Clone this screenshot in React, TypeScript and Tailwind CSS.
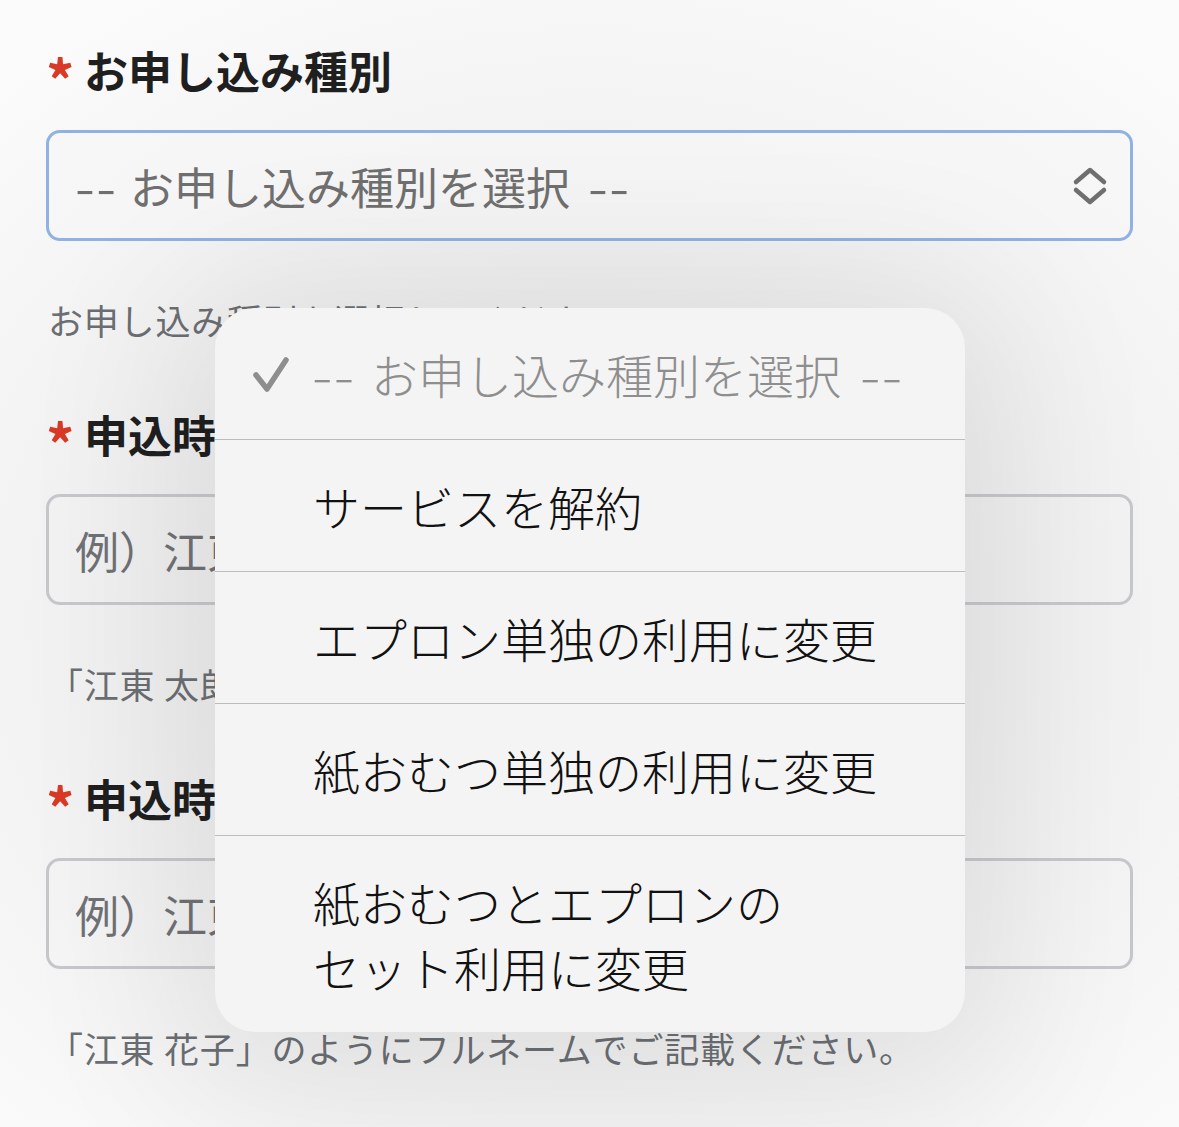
import React from "react";

function Chevrons() {
  return (
    <svg width="36" height="40" viewBox="0 0 36 40" fill="none" className="shrink-0">
      <path d="M4 16 L18 4 L32 16" stroke="#6f6f6f" strokeWidth="4.5" strokeLinecap="round" strokeLinejoin="round" />
      <path d="M4 24 L18 36 L32 24" stroke="#6f6f6f" strokeWidth="4.5" strokeLinecap="round" strokeLinejoin="round" />
    </svg>
  );
}

function Check() {
  return (
    <svg width="38" height="36" viewBox="0 0 38 36" fill="none" className="shrink-0">
      <path d="M4 19 L15 33 L34 4" stroke="#8e8e8e" strokeWidth="5.5" strokeLinecap="round" strokeLinejoin="round" />
    </svg>
  );
}

function Label({ text }: { text: string }) {
  return (
    <div className="flex h-[60px] items-center">
      <span className="w-[38px] translate-y-[8px] text-[56px] font-bold leading-none text-[#d93a26]">*</span>
      <span className="whitespace-nowrap text-[44px] font-bold leading-none text-[#1f1f1f]">{text}</span>
    </div>
  );
}

function Help({ text }: { text: string }) {
  return (
    <div className="mt-[57px] ml-[2px] h-[44px] whitespace-nowrap text-[35px] leading-[44px] tracking-[0.8px] text-[#6b6e72]">{text}</div>
  );
}

function Field({ label, placeholder, help }: { label: string; placeholder: string; help: string }) {
  return (
    <div className="flex flex-col">
      <Label text={label} />
      <div className="mt-[30px] flex h-[111px] items-center rounded-[14px] border-[3px] border-[#c5c7cb] pl-[26px]">
        <span className="whitespace-nowrap text-[44px] leading-none text-[#6f7175]">{placeholder}</span>
      </div>
      <Help text={help} />
    </div>
  );
}

export default function App() {
  const rows = ["サービスを解約", "エプロン単独の利用に変更", "紙おむつ単独の利用に変更"];
  return (
    <div className="relative h-[1127px] w-[1179px] overflow-hidden bg-[radial-gradient(ellipse_75%_65%_at_50%_55%,#e9e9e9_0%,#eeeeee_45%,#f6f6f6_80%,#fbfbfb_100%)] font-['Noto_Sans_CJK_JP','Noto_Sans',sans-serif]">
      <div className="flex flex-col gap-[62px] px-[46px] pt-[40px]">
        <div className="flex flex-col">
          <Label text="お申し込み種別" />
          <div className="mt-[30px] flex h-[111px] items-center justify-between rounded-[14px] border-[3px] border-[#8fb2e2] bg-[#f6f6f6]/60 pl-[26px] pr-[22px]">
            <span className="whitespace-nowrap text-[44px] leading-none text-[#6f6f6f]">
              <span className="inline-block w-[55px]"><span className="inline-block origin-left scale-x-[1.3] tracking-[1px]">--</span></span>
              お申し込み種別を選択
              <span className="inline-block w-[60px] pl-[18px]"><span className="inline-block origin-left scale-x-[1.3] tracking-[1px]">--</span></span>
            </span>
            <Chevrons />
          </div>
          <Help text="お申し込み種別を選択してください" />
        </div>
        <Field label="申込時のご利用者様氏名" placeholder="例）江東 太郎" help="「江東 太郎」のようにフルネームでご記載ください。" />
        <Field label="申込時の申込者様氏名" placeholder="例）江東 花子" help="「江東 花子」のようにフルネームでご記載ください。" />
      </div>

      <div className="absolute left-[215px] top-[308px] w-[750px] overflow-hidden rounded-[40px] bg-[#f4f4f4] font-light shadow-[0_20px_160px_50px_rgba(0,0,0,0.07)]">
        <div className="flex h-[131px] items-center gap-[22px] pl-[37px]">
          <Check />
          <span className="whitespace-nowrap text-[47px] leading-none text-[#8e8e8e]">
            <span className="inline-block w-[59px]"><span className="inline-block origin-left scale-x-[1.3] tracking-[1px]">--</span></span>
            お申し込み種別を選択
            <span className="inline-block w-[60px] pl-[19px]"><span className="inline-block origin-left scale-x-[1.3] tracking-[1px]">--</span></span>
          </span>
        </div>
        {rows.map((r) => (
          <React.Fragment key={r}>
            <div className="h-px bg-[#bcbcbc]" />
            <div className="flex h-[131px] items-center pl-[98px]">
              <span className="whitespace-nowrap text-[47px] leading-none text-[#111]">{r}</span>
            </div>
          </React.Fragment>
        ))}
        <div className="h-px bg-[#bcbcbc]" />
        <div className="flex h-[196px] flex-col justify-center pl-[98px] text-[47px] leading-[65px] text-[#111]">
          <span>紙おむつとエプロンの</span>
          <span>セット利用に変更</span>
        </div>
      </div>
    </div>
  );
}
